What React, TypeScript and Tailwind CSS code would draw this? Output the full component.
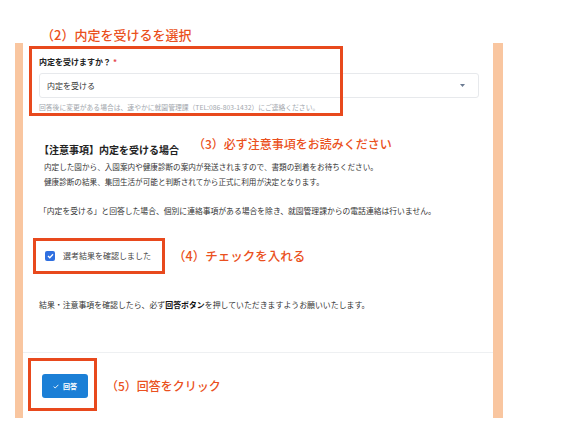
const jp = { fontFamily: '"Noto Sans CJK JP", "Noto Sans", sans-serif' };

export default function App() {
  return (
    <div className="relative w-[565px] h-[442px] overflow-hidden bg-white text-[#333]" style={jp}>
      {/* step 2 caption */}
      <div className="h-[43px] pl-[41px] pt-[27px] text-[13px] leading-[16px] font-medium text-[#ea5020]">
        （2）内定を受けるを選択
      </div>

      {/* peach frame */}
      <div className="ml-[15px] w-[488px] h-[375px] bg-[#f9c6a0] pl-[8px] pr-[10px]">
        <div className="flex h-full flex-col bg-white">
          <div className="px-[16px] pt-[14px]">
            <div className="text-[8px] leading-[10px] font-bold text-[#222]">
              内定を受けますか？<span className="ml-[2px] text-[#e5484d]">*</span>
            </div>
            <div className="mt-[6px] flex h-[25px] w-[440px] items-center justify-between rounded-[3px] border border-[#e7e9ec] pl-[7px] pr-[13px]">
              <span className="text-[8px] leading-[10px] text-[#333]">内定を受ける</span>
              <svg width="5" height="3" viewBox="0 0 5 3">
                <path d="M0 0 L5 0 L2.5 3 Z" fill="#6b7b92" />
              </svg>
            </div>
            <div className="mt-[5px] text-[6.8px] leading-[9px] text-[#a3a7ad]">
              回答後に変更がある場合は、速やかに就園管理課（TEL:086-803-1432）にご連絡ください。
            </div>

            <div className="mt-[31px] flex items-center">
              <span className="text-[10px] leading-[14px] font-bold text-[#222]">【注意事項】内定を受ける場合</span>
              <span className="ml-[14px] -translate-y-[6px] text-[12px] leading-[14px] font-medium text-[#ea5020]">
                （3）必ず注意事項をお読みください
              </span>
            </div>
            <div className="mt-[2px] pl-[5px] text-[7.6px] leading-[15px] text-[#333]">
              <p>内定した園から、入園案内や健康診断の案内が発送されますので、書類の到着をお待ちください。</p>
              <p>健康診断の結果、集団生活が可能と判断されてから正式に利用が決定となります。</p>
            </div>
            <p className="mt-[14px] text-[7.8px] leading-[15px] text-[#333]">
              「内定を受ける」と回答した場合、個別に連絡事項がある場合を除き、就園管理課からの電話連絡は行いません。
            </p>

            <div className="mt-[30px] flex h-[15px] items-center">
              <div className="ml-[6px] flex h-[10px] w-[10px] items-center justify-center rounded-[2px] bg-[#2f6fe0]">
                <svg width="7" height="6" viewBox="0 0 7 6">
                  <path d="M1 3 L2.8 4.7 L6 1.2" fill="none" stroke="#fff" strokeWidth="1.3" />
                </svg>
              </div>
              <span className="ml-[8px] text-[8px] leading-[10px] text-[#444]">選考結果を確認しました</span>
              <span className="ml-[22px] text-[12.5px] leading-[14px] font-medium text-[#ea5020]">（4）チェックを入れる</span>
            </div>

            <p className="mt-[34px] text-[7.9px] leading-[15px] text-[#333]">
              結果・注意事項を確認したら、必ず<span className="font-bold text-[#111]">回答ボタン</span>
              を押していただきますようお願いいたします。
            </p>
          </div>

          <div className="mt-[40px] border-t border-[#eef0f2]" />

          <div className="flex items-center pl-[19px] pt-[21px]">
            <button className="flex h-[24px] w-[46px] items-center justify-center gap-[4px] rounded-[3px] bg-[#1b7fd6] text-[7px] font-bold text-white">
              <svg width="6" height="5" viewBox="0 0 6 5">
                <path d="M0.6 2.6 L2.2 4 L5.4 0.8" fill="none" stroke="#fff" strokeWidth="0.9" />
              </svg>
              回答
            </button>
            <span className="ml-[18px] text-[12px] leading-[14px] font-medium text-[#ea5020]">（5）回答をクリック</span>
          </div>
        </div>
      </div>

      {/* highlight boxes */}
      <div className="absolute left-[29px] top-[46px] h-[70px] w-[314px] border-[3px] border-[#e8491d]" />
      <div className="absolute left-[33px] top-[238px] h-[36px] w-[132px] border-[3px] border-[#e8491d]" />
      <div className="absolute left-[28px] top-[358px] h-[53px] w-[69px] border-[3px] border-[#e8491d]" />
    </div>
  );
}
